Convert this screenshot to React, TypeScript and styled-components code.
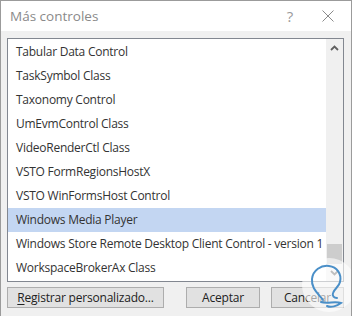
import React, { useState } from 'react';
import styled, { createGlobalStyle } from 'styled-components';

const GlobalStyle = createGlobalStyle`
  html, body {
    margin: 0;
    padding: 0;
    background: #f0f0f0;
  }
  * {
    box-sizing: border-box;
  }
`;

const Window = styled.div`
  position: relative;
  width: 352px;
  height: 316px;
  border: 1px solid #9b9b9b;
  border-bottom: none;
  display: flex;
  flex-direction: column;
  background: #f0f0f0;
  font-family: "Open Sans", "Noto Sans", sans-serif;
  overflow: hidden;
`;

const TitleBar = styled.div`
  height: 30px;
  background: #ffffff;
  display: flex;
  align-items: center;
  padding-left: 9px;
  flex-shrink: 0;
`;

const Title = styled.div`
  flex: 1;
  font-size: 13.5px;
  color: #8a8a8a;
`;

const CaptionButton = styled.div<{ $width: number }>`
  width: ${props => props.$width}px;
  height: 30px;
  display: flex;
  align-items: center;
  justify-content: center;
  color: #9a9a9a;
  font-size: 15px;
`;

const Body = styled.div`
  flex: 1;
  display: flex;
  flex-direction: column;
  padding: 7px 7px 0 6px;
`;

const ListBox = styled.div`
  height: 244px;
  border: 1px solid #828790;
  background: #ffffff;
  display: flex;
`;

const Items = styled.div`
  flex: 1;
  min-width: 0;
  overflow: hidden;
  padding-top: 1px;
`;

const Row = styled.div<{ $selected?: boolean }>`
  height: 24px;
  line-height: 24px;
  padding-left: 8px;
  font-size: 12px;
  letter-spacing: -0.25px;
  color: #333333;
  white-space: nowrap;
  background: ${props => (props.$selected ? '#c3d6f2' : 'transparent')};
  cursor: default;
`;

const ScrollBar = styled.div`
  width: 17px;
  flex-shrink: 0;
  background: #f0f0f0;
  display: flex;
  flex-direction: column;
`;

const ArrowBox = styled.div`
  height: 17px;
  display: flex;
  align-items: center;
  justify-content: center;
`;

const Track = styled.div`
  flex: 1;
  display: flex;
  flex-direction: column;
  justify-content: flex-end;
  align-items: center;
`;

const Thumb = styled.div`
  width: 15px;
  height: 20px;
  background: #cdcdcd;
`;

const ButtonRow = styled.div`
  display: flex;
  justify-content: space-between;
  margin-top: 5px;
`;

const ButtonGroup = styled.div`
  display: flex;
  gap: 11px;
`;

const Button = styled.button<{ $width: number }>`
  width: ${props => props.$width}px;
  height: 21px;
  padding: 0;
  border: 1px solid #adadad;
  background: #e1e1e1;
  color: #222222;
  font-family: "Open Sans", "Noto Sans", sans-serif;
  font-size: 12px;
  letter-spacing: -0.2px;
  line-height: 19px;
  white-space: nowrap;
`;

const Mnemonic = styled.span`
  text-decoration: underline;
  text-underline-offset: 2px;
`;

const Watermark = styled.svg`
  position: absolute;
  left: 300px;
  top: 255px;
  pointer-events: none;
`;

const items = [
  'Tabular Data Control',
  'TaskSymbol Class',
  'Taxonomy Control',
  'UmEvmControl Class',
  'VideoRenderCtl Class',
  'VSTO FormRegionsHostX',
  'VSTO WinFormsHost Control',
  'Windows Media Player',
  'Windows Store Remote Desktop Client Control - version 1',
  'WorkspaceBrokerAx Class',
];

const Chevron = ({ up }: { up?: boolean }) => (
  <svg width="9" height="6" viewBox="0 0 9 6">
    <path
      d={up ? 'M1 5 L4.5 1.5 L8 5' : 'M1 1 L4.5 4.5 L8 1'}
      fill="none"
      stroke="#606060"
      strokeWidth="1.8"
    />
  </svg>
);

const App = () => {
  const [selected, setSelected] = useState('Windows Media Player');

  return (
    <>
      <GlobalStyle />
      <Window>
        <TitleBar>
          <Title>Más controles</Title>
          <CaptionButton $width={30}>?</CaptionButton>
          <CaptionButton $width={46}>
            <svg width="12" height="12" viewBox="0 0 12 12">
              <path d="M0.5 0.5 L11.5 11.5 M11.5 0.5 L0.5 11.5" stroke="#8a8a8a" strokeWidth="1" />
            </svg>
          </CaptionButton>
        </TitleBar>
        <Body>
          <ListBox>
            <Items>
              {items.map(name => (
                <Row
                  key={name}
                  $selected={name === selected}
                  onClick={() => setSelected(name)}
                >
                  {name}
                </Row>
              ))}
            </Items>
            <ScrollBar>
              <ArrowBox>
                <Chevron up />
              </ArrowBox>
              <Track>
                <Thumb />
              </Track>
              <ArrowBox>
                <Chevron />
              </ArrowBox>
            </ScrollBar>
          </ListBox>
          <ButtonRow>
            <Button $width={157}>
              <Mnemonic>R</Mnemonic>egistrar personalizado...
            </Button>
            <ButtonGroup>
              <Button $width={74}>Aceptar</Button>
              <Button $width={73}>Cancelar</Button>
            </ButtonGroup>
          </ButtonRow>
        </Body>
        <Watermark width="56" height="58" viewBox="0 0 56 58">
          <circle cx="28" cy="29" r="27" fill="#ffffff" fillOpacity="0.6" />
          <path
            d="M22 44 C18 38 10 33 11 23 C12 14 20 9 28 10 C36 11 41 18 39 26 C38 31 33 33 32 37 C31 40 33 42 36 42"
            fill="none"
            stroke="#4a8fc8"
            strokeWidth="2"
            strokeLinecap="round"
          />
          <path
            d="M20 46 C26 48 34 45 40 47 C36 50 30 52 26 50"
            fill="none"
            stroke="#4a8fc8"
            strokeWidth="2"
            strokeLinecap="round"
          />
        </Watermark>
      </Window>
    </>
  );
};

export default App;
